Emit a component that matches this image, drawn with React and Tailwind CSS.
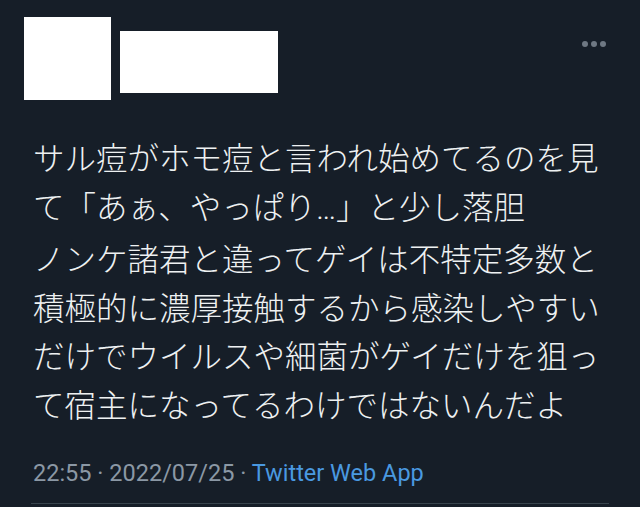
import React from "react";

const lines = [
  "サル痘がホモ痘と言われ始めてるのを見",
  <>
    て「あぁ、やっぱり<span style={{ fontFamily: "Roboto, sans-serif" }}>…</span>」と少し落胆
  </>,
  "ノンケ諸君と違ってゲイは不特定多数と",
  "積極的に濃厚接触するから感染しやすい",
  "だけでウイルスや細菌がゲイだけを狙っ",
  "て宿主になってるわけではないんだよ",
];

const App = () => {
  return (
    <div className="w-[640px] h-[507px] overflow-hidden bg-[#161e28]">
      <div className="flex items-start pt-[17px] pl-[24px] pr-[34px]">
        <div className="w-[87px] h-[83px] bg-white" />
        <div className="ml-[9px] mt-[14px] w-[158px] h-[62px] bg-white" />
        <div className="ml-auto mt-[24px] flex gap-[3px]">
          <span className="w-[6px] h-[6px] rounded-full bg-[#6e7883]" />
          <span className="w-[6px] h-[6px] rounded-full bg-[#6e7883]" />
          <span className="w-[6px] h-[6px] rounded-full bg-[#6e7883]" />
        </div>
      </div>

      <div
        className="mt-[32px] pl-[33px] text-[31.5px] leading-[48.5px] font-light text-[#eef1f2]"
        style={{ fontFamily: '"Noto Sans CJK JP", "Noto Sans", sans-serif' }}
      >
        {lines.map((l, i) => (
          <div key={i} className="whitespace-nowrap">
            {l}
          </div>
        ))}
      </div>

      <div
        className="mt-[32px] pl-[33px] text-[23.5px] leading-[28px] text-[#8b98a5] whitespace-nowrap"
        style={{ fontFamily: "Roboto, Inter, sans-serif" }}
      >
        22:55 · 2022/07/25 · <span className="text-[#4a99e0]">Twitter Web App</span>
      </div>

      <div className="mt-[16px] mx-[31px] h-px bg-[#38444d]" />
    </div>
  );
};

export default App;
